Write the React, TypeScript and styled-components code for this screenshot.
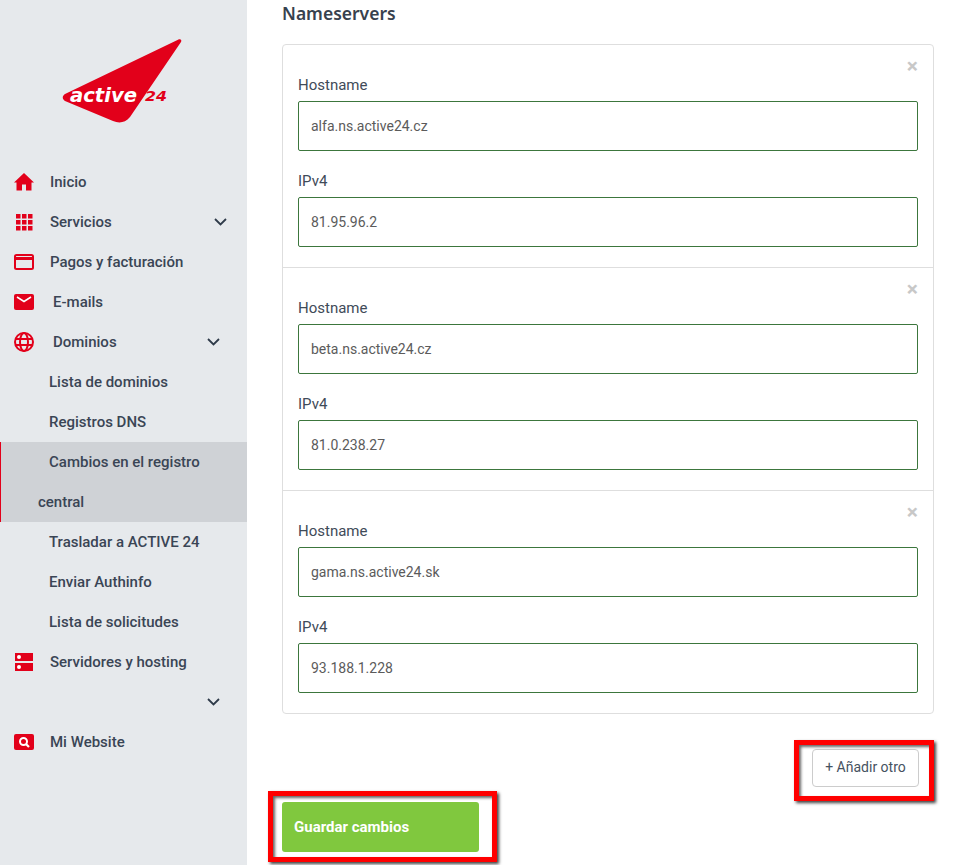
import React from "react";
import styled, { createGlobalStyle } from "styled-components";

const Global = createGlobalStyle`
  html, body {
    margin: 0;
    padding: 0;
    height: 100%;
    overflow: hidden;
    background: #ffffff;
    font-family: Roboto, "Liberation Sans", sans-serif;
  }
  * { box-sizing: border-box; }
`;

const Page = styled.div`
  display: flex;
  height: 865px;
`;

const Sidebar = styled.aside`
  flex: none;
  width: 247px;
  background: #e6e9ec;
`;

const LogoBox = styled.div`
  height: 162px;
  padding: 39px 0 0 62px;
  svg { display: block; overflow: visible; }
`;

const NavRow = styled.div<{ $wrap?: boolean; $gap?: number; $chevronRight?: number }>`
  display: flex;
  flex-wrap: ${p => (p.$wrap ? "wrap" : "nowrap")};
  align-items: center;
  padding-left: 14px;
  padding-right: ${p => p.$chevronRight ?? 20}px;
  color: #3a4555;
  font-size: 15px;
  font-weight: 500;
  line-height: 40px;
  & > span { margin-left: ${p => p.$gap ?? 16}px; }
  & > svg:first-child { flex: none; }
`;

const Chevron = styled.svg`
  flex: none;
  margin-left: auto;
  width: 13px;
  height: 8px;
`;

const WrapChevronLine = styled.div`
  display: flex;
  justify-content: flex-end;
  align-items: center;
  flex-basis: 100%;
  height: 40px;
`;

const SubRow = styled.div<{ $active?: boolean }>`
  padding-left: ${p => (p.$active ? 37 : 38)}px;
  padding-right: 10px;
  text-indent: 11px;
  color: #3a4555;
  font-size: 15px;
  font-weight: 500;
  line-height: 40px;
  background: ${p => (p.$active ? "#cfd2d6" : "transparent")};
  border-left: ${p => (p.$active ? "1px solid #e2001a" : "0")};
`;

const Main = styled.main`
  flex: none;
  width: 652px;
  margin-left: 35px;
`;

const Heading = styled.h3`
  margin: 0 0 16px;
  height: 28px;
  color: #37414e;
  font-family: "Noto Sans", "Open Sans", sans-serif;
  font-size: 17.5px;
  font-weight: 600;
  line-height: 27px;
`;

const Card = styled.div`
  border: 1px solid #dedede;
  border-radius: 4px;
`;

const Section = styled.div`
  position: relative;
  padding: 29px 15px 20px;
  & + & { border-top: 1px solid #dedede; }
`;

const Close = styled.span`
  position: absolute;
  top: 7px;
  right: 15px;
  color: #c8c8c8;
  font-size: 21px;
  font-weight: 700;
  line-height: 28px;
`;

const Label = styled.label`
  display: block;
  height: 27px;
  color: #3f4b59;
  font-size: 15px;
  line-height: 22px;
`;

const Input = styled.input`
  display: block;
  width: 100%;
  height: 50px;
  margin-bottom: 19px;
  padding: 0 12px;
  border: 1px solid #3c763d;
  border-radius: 2px;
  outline: none;
  background: #ffffff;
  color: #5b5b5b;
  font-family: Roboto, "Liberation Sans", sans-serif;
  font-size: 14px;
  &:last-child { margin-bottom: 0; }
`;

const AddRow = styled.div`
  display: flex;
  justify-content: flex-end;
  padding: 35px 15px 15px 0;
`;

const Marked = styled.div<{ $t: number; $r: number; $b: number; $l: number }>`
  position: relative;
  display: inline-block;
  &::after {
    content: "";
    position: absolute;
    top: ${p => p.$t}px;
    right: ${p => p.$r}px;
    bottom: ${p => p.$b}px;
    left: ${p => p.$l}px;
    border: 5px solid #ff0000;
    box-shadow: 2px 2px 3px rgba(0, 0, 0, 0.75), inset 2px 2px 3px rgba(0, 0, 0, 0.6);
    pointer-events: none;
  }
`;

const AddButton = styled.button`
  display: block;
  width: 107px;
  height: 38px;
  padding: 0 0 2px;
  border: 1px solid #cccccc;
  border-radius: 4px;
  background: #ffffff;
  color: #46525f;
  font-family: Roboto, "Liberation Sans", sans-serif;
  font-size: 14px;
`;

const SaveButton = styled.button`
  display: block;
  width: 197px;
  height: 50px;
  padding: 0 12px;
  border: 0;
  border-radius: 3px;
  background: #80c83e;
  color: #ffffff;
  font-family: Roboto, "Liberation Sans", sans-serif;
  font-size: 15px;
  font-weight: 700;
  text-align: left;
`;

const red = "#e2001a";

const Logo = () => (
  <svg width="108" height="84" viewBox="0 0 108 84">
    <path d="M116 0.800 C118.500 -0.500 120 1 119 3 L68 78 C63 84 57 84.500 51 82 L3 62 C0 60 0 57 3 55 Z" fill={red} />
    <text
      x="8"
      y="63"
      fontFamily="'DejaVu Sans', sans-serif"
      fontSize="20"
      fontWeight="700"
      fontStyle="italic"
      fill="#ffffff"
      textLength="67"
      lengthAdjust="spacingAndGlyphs"
    >
      active
    </text>
    <text
      x="83"
      y="62"
      fontFamily="'DejaVu Sans', sans-serif"
      fontSize="14"
      fontWeight="700"
      fontStyle="italic"
      fill={red}
      textLength="22"
      lengthAdjust="spacingAndGlyphs"
    >
      24
    </text>
  </svg>
);

const HomeIcon = () => (
  <svg width="20" height="18" viewBox="0 0 20 18">
    <path d="M10 0 L20 9.500 L17.500 9.500 L17.500 17.500 L12 17.500 L12 11.500 L8 11.500 L8 17.500 L2.500 17.500 L2.500 9.500 L0 9.500 Z" fill={red} />
  </svg>
);

const GridIcon = () => (
  <svg width="20" height="18" viewBox="0 0 20 18">
    {[0, 6, 12].map(y =>
      [2, 8, 14].map(x => <rect key={`${x}-${y}`} x={x} y={y + 1} width="4.500" height="4.500" fill={red} />)
    )}
  </svg>
);

const CardIcon = () => (
  <svg width="20" height="16" viewBox="0 0 20 16">
    <rect x="1" y="1" width="18" height="14" rx="1.500" fill="none" stroke={red} strokeWidth="2" />
    <rect x="1" y="3" width="18" height="3" fill={red} />
  </svg>
);

const MailIcon = () => (
  <svg width="20" height="16" viewBox="0 0 20 16">
    <rect width="20" height="16" rx="2" fill={red} />
    <path d="M3 3 L10 7.500 L17 3" fill="none" stroke="#ffffff" strokeWidth="1.500" />
  </svg>
);

const GlobeIcon = () => (
  <svg width="20" height="20" viewBox="0 0 20 20" fill="none" stroke={red} strokeWidth="2">
    <circle cx="10" cy="10" r="9" />
    <ellipse cx="10" cy="10" rx="4" ry="9" />
    <path d="M1.500 7 H18.500 M1.500 13 H18.500" />
  </svg>
);

const ServerIcon = () => (
  <svg width="20" height="18" viewBox="0 0 20 18">
    <rect x="1" y="0" width="18" height="8" fill={red} />
    <rect x="1" y="10" width="18" height="8" fill={red} />
    <circle cx="5" cy="4" r="2" fill="#ffffff" />
    <circle cx="5" cy="14" r="2" fill="#ffffff" />
  </svg>
);

const SearchIcon = () => (
  <svg width="20" height="16" viewBox="0 0 20 16">
    <rect width="20" height="16" rx="2" fill={red} />
    <circle cx="9.500" cy="7.500" r="3.500" fill="none" stroke="#ffffff" strokeWidth="2" />
    <path d="M12 10 L15 13" stroke="#ffffff" strokeWidth="2.200" />
  </svg>
);

const ChevronDown = () => (
  <Chevron viewBox="0 0 13 8">
    <path d="M1 1 L6.500 6.500 L12 1" fill="none" stroke="#2f3b4a" strokeWidth="1.800" />
  </Chevron>
);

const servers = [
  { host: "alfa.ns.active24.cz", ip: "81.95.96.2" },
  { host: "beta.ns.active24.cz", ip: "81.0.238.27" },
  { host: "gama.ns.active24.sk", ip: "93.188.1.228" },
];

const App = () => {
  return (
    <Page>
      <Global />
      <Sidebar>
        <LogoBox>
          <Logo />
        </LogoBox>
        <NavRow>
          <HomeIcon />
          <span>Inicio</span>
        </NavRow>
        <NavRow>
          <GridIcon />
          <span>Servicios</span>
          <ChevronDown />
        </NavRow>
        <NavRow>
          <CardIcon />
          <span>Pagos y facturación</span>
        </NavRow>
        <NavRow $gap={19}>
          <MailIcon />
          <span>E-mails</span>
        </NavRow>
        <NavRow $gap={19} $chevronRight={27}>
          <GlobeIcon />
          <span>Dominios</span>
          <ChevronDown />
        </NavRow>
        <SubRow>Lista de dominios</SubRow>
        <SubRow>Registros DNS</SubRow>
        <SubRow $active>Cambios en el registro central</SubRow>
        <SubRow>Trasladar a ACTIVE 24</SubRow>
        <SubRow>Enviar Authinfo</SubRow>
        <SubRow>Lista de solicitudes</SubRow>
        <NavRow $wrap $chevronRight={27}>
          <ServerIcon />
          <span>Servidores y hosting</span>
          <WrapChevronLine>
            <ChevronDown />
          </WrapChevronLine>
        </NavRow>
        <NavRow>
          <SearchIcon />
          <span>Mi Website</span>
        </NavRow>
      </Sidebar>
      <Main>
        <Heading>Nameservers</Heading>
        <Card>
          {servers.map(s => (
            <Section key={s.host}>
              <Close>×</Close>
              <Label>Hostname</Label>
              <Input defaultValue={s.host} />
              <Label>IPv4</Label>
              <Input defaultValue={s.ip} />
            </Section>
          ))}
        </Card>
        <AddRow>
          <Marked $t={-9} $r={-15} $b={-14} $l={-18}>
            <AddButton>+ Añadir otro</AddButton>
          </Marked>
        </AddRow>
        <Marked $t={-11} $r={-18} $b={-10} $l={-14}>
          <SaveButton>Guardar cambios</SaveButton>
        </Marked>
      </Main>
    </Page>
  );
};

export default App;
